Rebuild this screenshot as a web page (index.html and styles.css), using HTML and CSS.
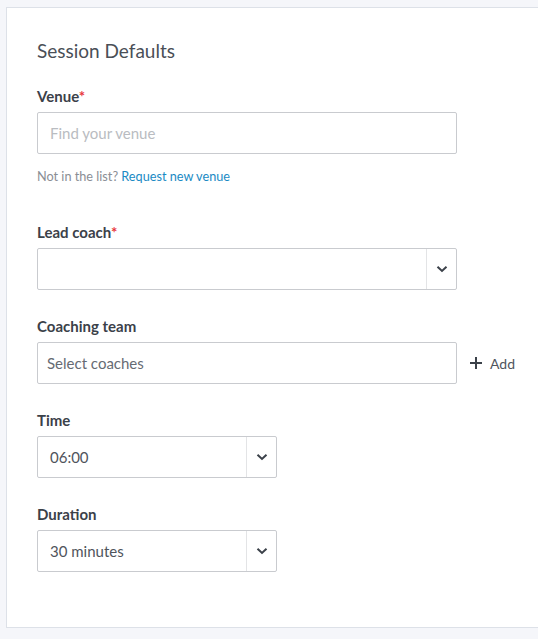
FILE: index.html
```html
<!DOCTYPE html>
<html lang="en">
<head>
<meta charset="utf-8">
<title>Session Defaults</title>
<link rel="stylesheet" href="styles.css">
</head>
<body>
<div class="page">
  <section class="card">
    <h2 class="title">Session Defaults</h2>

    <div class="field field-venue">
      <label class="label">Venue<span class="req">*</span></label>
      <div class="control text-input wide"><span class="placeholder">Find your venue</span></div>
      <p class="help">Not in the list? <a class="link" href="#">Request new venue</a></p>
    </div>

    <div class="field">
      <label class="label">Lead coach<span class="req">*</span></label>
      <div class="control select wide">
        <span class="value"></span>
        <span class="arrow"><svg width="12" height="8" viewBox="0 0 12 8"><path d="M1.5 1.8 L6 6 L10.5 1.8" fill="none" stroke="#3b4149" stroke-width="2"/></svg></span>
      </div>
    </div>

    <div class="field">
      <label class="label">Coaching team</label>
      <div class="row">
        <div class="control text-input wide multi"><span class="muted">Select coaches</span></div>
        <button class="add" type="button"><svg width="12" height="12" viewBox="0 0 12 12"><path d="M6 0 V12 M0 6 H12" stroke="#3b4149" stroke-width="2"/></svg><span>Add</span></button>
      </div>
    </div>

    <div class="field">
      <label class="label">Time</label>
      <div class="control select narrow">
        <span class="value">06:00</span>
        <span class="arrow"><svg width="12" height="8" viewBox="0 0 12 8"><path d="M1.5 1.8 L6 6 L10.5 1.8" fill="none" stroke="#3b4149" stroke-width="2"/></svg></span>
      </div>
    </div>

    <div class="field">
      <label class="label">Duration</label>
      <div class="control select narrow">
        <span class="value">30 minutes</span>
        <span class="arrow"><svg width="12" height="8" viewBox="0 0 12 8"><path d="M1.5 1.8 L6 6 L10.5 1.8" fill="none" stroke="#3b4149" stroke-width="2"/></svg></span>
      </div>
    </div>
  </section>
</div>
</body>
</html>
```

FILE: styles.css
```css
html, body {
  margin: 0;
  padding: 0;
  background: #f5f6fa;
  overflow: hidden;
}

body {
  font-family: Lato, "Open Sans", Arial, sans-serif;
  color: #3b4149;
}

.page {
  padding: 7px 0 0 6px;
}

.card {
  background: #ffffff;
  border: 1px solid #dde1e8;
  border-right: none;
  padding: 31px 30px 55px 30px;
}

.title {
  margin: 0 0 23px 0;
  font-size: 19px;
  line-height: 24px;
  font-weight: 400;
  color: #4a4f57;
}

.field {
  display: flex;
  flex-direction: column;
  align-items: flex-start;
  margin-bottom: 26px;
}

.field-venue {
  margin-bottom: 38px;
}

.field:last-child {
  margin-bottom: 0;
}

.label {
  font-size: 15px;
  line-height: 20px;
  font-weight: 700;
  color: #3b4149;
  margin-bottom: 6px;
}

.req {
  color: #e8363d;
}

.control {
  box-sizing: border-box;
  height: 42px;
  border: 1px solid #c9cbcf;
  border-radius: 2px;
  background: #fff;
  display: flex;
  align-items: center;
  font-size: 15px;
}

.wide {
  width: 420px;
}

.narrow {
  width: 240px;
}

.text-input {
  padding: 0 12px;
}

.text-input.multi {
  padding: 0 9px;
}

.placeholder {
  color: #b9bcc1;
}

.muted {
  color: #666b73;
}

.help {
  margin: 14px 0 0 0;
  font-size: 12.7px;
  line-height: 16px;
  color: #8a8e95;
}

.link {
  color: #1a8ac4;
  text-decoration: none;
}

.select .value {
  flex: 1;
  padding: 0 12px;
  color: #4f545c;
}

.arrow {
  width: 29px;
  height: 100%;
  border-left: 1px solid #e3e4e6;
  display: flex;
  align-items: center;
  justify-content: center;
}

.row {
  display: flex;
  align-items: center;
}

.add {
  display: flex;
  align-items: center;
  gap: 8px;
  margin-left: 13px;
  padding: 0;
  border: none;
  background: none;
  font-family: Lato, "Open Sans", Arial, sans-serif;
  font-size: 14px;
  color: #50555d;
  cursor: pointer;
}
```
